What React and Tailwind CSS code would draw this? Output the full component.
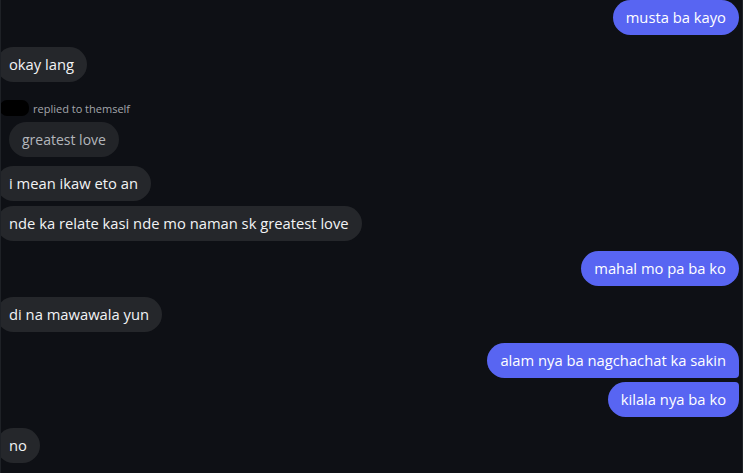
export default function App() {
  const font = { fontFamily: '"Open Sans", "Noto Sans", sans-serif' };

  const Left = ({ children, className = "" }) => (
    <div className={`flex ${className}`}>
      <div className="ml-[-5px] rounded-[18px] bg-[#25272b] px-[13px] py-[7px] text-[14.75px] leading-[21px] text-[#f2f3f5]">
        {children}
      </div>
    </div>
  );

  const Right = ({ children, className = "", corner = "rounded-[18px]" }) => (
    <div className={`flex justify-end ${className}`}>
      <div className={`bg-[#5865f2] px-[13px] py-[7px] text-[14.75px] leading-[21px] text-white ${corner}`}>
        {children}
      </div>
    </div>
  );

  return (
    <div
      className="h-[473px] w-[743px] overflow-hidden border-l border-r border-[#1e2126] bg-[#0e1015] pr-[3px]"
      style={font}
    >
      <div className="flex flex-col">
        <Right>musta ba kayo</Right>
        <Left className="mt-[12px]">okay lang</Left>

        {/* reply */}
        <div className="mt-[18px] flex items-center">
          <div className="ml-[-1px] h-[16px] w-[29px] rounded-[7px] bg-black" />
          <span className="ml-[4px] text-[11px] leading-[15px] text-[#a3a6ab]">replied to themself</span>
        </div>
        <div className="mt-[6px] flex">
          <div className="ml-[8px] rounded-[18px] bg-[#222428] px-[13px] py-[7px] text-[14px] leading-[21px] text-[#b3b6bb]">
            greatest love
          </div>
        </div>

        <Left className="mt-[9px]">i mean ikaw eto an</Left>
        <Left className="mt-[5px]">nde ka relate kasi nde mo naman sk greatest love</Left>
        <Right className="mt-[10px]">mahal mo pa ba ko</Right>
        <Left className="mt-[11px]">di na mawawala yun</Left>
        <Right className="mt-[11px]" corner="rounded-[18px] rounded-br-[4px]">
          alam nya ba nagchachat ka sakin
        </Right>
        <Right className="mt-[4px]" corner="rounded-[18px] rounded-tr-[4px]">
          kilala nya ba ko
        </Right>
        <Left className="mt-[11px]">no</Left>
      </div>
    </div>
  );
}
